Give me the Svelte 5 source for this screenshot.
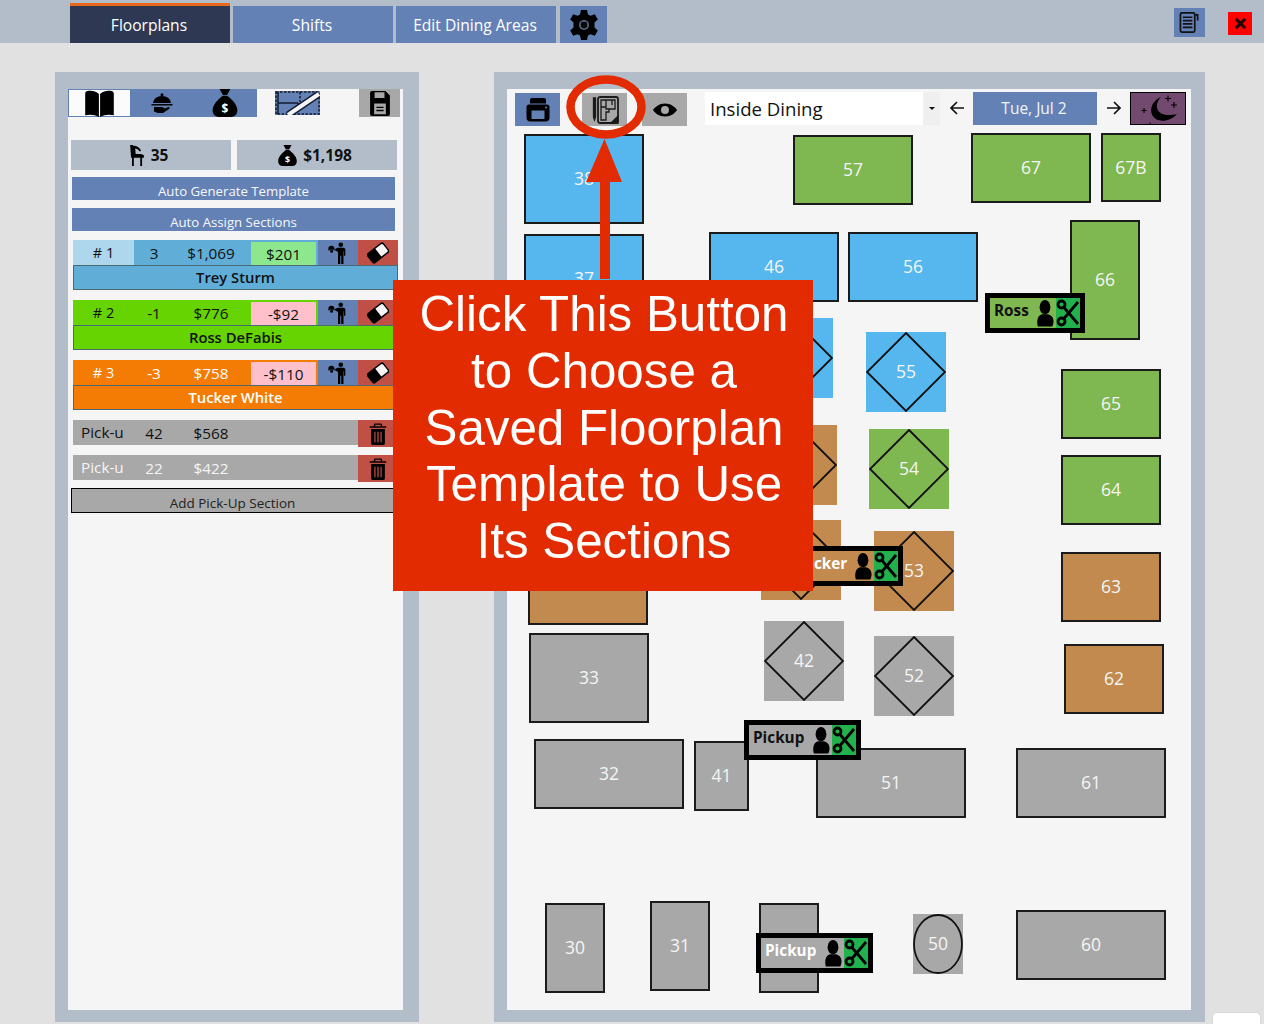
<script>
  const tabs = [
    { label: 'Shifts' },
    { label: 'Edit Dining Areas' }
  ];
  const sections = [
    { num: '# 1', count: '3', sales: '$1,069', diff: '$201', name: 'Trey Sturm', cls: 'blue', good: true },
    { num: '# 2', count: '-1', sales: '$776', diff: '-$92', name: 'Ross DeFabis', cls: 'lime', good: false },
    { num: '# 3', count: '-3', sales: '$758', diff: '-$110', name: 'Tucker White', cls: 'orange', good: false }
  ];
  const pickups = [
    { count: '42', sales: '$568', light: false },
    { count: '22', sales: '$422', light: true }
  ];
  const tan = '#c28a4e', sky = '#55b7ee', grn = '#7fb751', gry = '#a8a8a8';
  const tables = [
    ['38', 524, 134, 120, 90, sky], ['37', 524, 234, 120, 90, sky], ['57', 793, 135, 120, 70, grn],
    ['67', 971, 133, 120, 70, grn], ['67B', 1101, 133, 60, 69, grn], ['46', 709, 232, 130, 70, sky],
    ['56', 848, 232, 130, 70, sky], ['66', 1070, 220, 70, 120, grn], ['65', 1061, 369, 100, 70, grn],
    ['64', 1061, 455, 100, 70, grn], ['63', 1061, 552, 100, 70, tan], ['62', 1064, 644, 100, 70, tan],
    ['34', 528, 535, 120, 90, tan], ['33', 529, 633, 120, 90, gry], ['32', 534, 739, 150, 70, gry],
    ['41', 694, 741, 55, 70, gry], ['51', 816, 748, 150, 70, gry], ['61', 1016, 748, 150, 70, gry],
    ['30', 545, 903, 60, 90, gry], ['31', 650, 901, 60, 90, gry], ['40', 759, 903, 60, 90, gry],
    ['60', 1016, 910, 150, 70, gry]
  ];
  const diamonds = [
    ['45', 753, 318, sky], ['55', 866, 332, sky], ['44', 757, 425, tan], ['54', 869, 429, grn],
    ['43', 761, 520, tan], ['53', 874, 531, tan], ['42', 764, 621, gry], ['52', 874, 636, gry]
  ];
  const tags = [
    ['Ross', 985, 293, 100, grn, false],
    ['Tucker', 786, 546, 117, tan, true],
    ['Pickup', 744, 720, 117, gry, false],
    ['Pickup', 756, 933, 117, gry, true]
  ];
</script>

{#snippet waiter()}
  <svg viewBox="0 0 24 24" class="ic"><circle cx="15" cy="3" r="2.500"/><path d="M11.500 6.200h7l1.500 1.300V15h-1.500v-5l-.5 0V24h-2.500v-9h-1v9H12V11L8.500 8.800l.7-1.500z"/><path d="M1.500 7.500a3.300 3.300 0 0 1 6.600 0zM1 8h7.600v1.100H1z"/><path d="M3.500 9h3v2.500h-3z"/></svg>
{/snippet}
{#snippet eraser()}
  <svg viewBox="0 0 26 24" class="ic er"><g transform="rotate(-38 13 12)"><rect x="0.500" y="4.500" width="25" height="15" rx="3"/><path d="M13.500 6.200h8.800a1.600 1.600 0 0 1 1.600 1.600v8.400a1.600 1.600 0 0 1-1.600 1.600h-8.800z" fill="#f5f5f5"/></g></svg>
{/snippet}
{#snippet trash()}
  <svg viewBox="0 0 20 24" class="ic"><path d="M7 .5h6a1.500 1.500 0 0 1 1.500 1.500v1.500H19v1.800H1V3.500h4.500V2A1.500 1.500 0 0 1 7 .5zM7 3.500h6V2H7z"/><path fill-rule="evenodd" d="M2.500 6.500h15V22a2 2 0 0 1-2 2h-11a2 2 0 0 1-2-2zM6 9.500V21h1.300V9.500zm3.300 0V21h1.400V9.500zm3.400 0V21H14V9.500z"/></svg>
{/snippet}
{#snippet bag(size)}
  <svg viewBox="0 0 24 26" width={size} height={size} class="bag"><path d="M7 0h10l-3 5.500h-4zM10 6.300h4C19 10 23.500 15 23.500 20c0 4-3 6-6 6h-11c-3 0-6-2-6-6C.5 15 5 10 10 6.300z"/><text x="12" y="22" text-anchor="middle" class="dollar">$</text></svg>
{/snippet}
{#snippet tag(t)}
  <div class="tag" style="left:{t[1]}px;top:{t[2]}px;width:{t[3]}px;background:{t[4]}">
    <span class="tagname" class:white={t[5]}>{t[0]}</span>
    <svg viewBox="0 0 20 30" class="person"><ellipse cx="10" cy="8.500" rx="6" ry="8"/><path d="M2 30c-2-8 1-13 5-13.500h6C17 17 22 22 18 30z"/></svg>
    <span class="cut"><svg viewBox="0 0 24 30" class="scissors"><circle cx="5.500" cy="6.500" r="3.500" /><circle cx="5.500" cy="23.500" r="3.500"/><path d="M8 9.500 22 26M8 20.500 22 4"/></svg></span>
  </div>
{/snippet}

<div class="app">
  <header class="top">
    <div class="tab active">Floorplans</div>
    {#each tabs as t}<div class="tab">{t.label}</div>{/each}
    <div class="gear">
      <svg viewBox="0 0 28 30" width="28" height="30"><path d="M11 0h6l1 4.500 2.500 1.300 4.300-1.500 3 5.200L24.500 12.500v5l3.300 3-3 5.200-4.300-1.500L18 25.500 17 30h-6l-1-4.500-2.500-1.300-4.300 1.500-3-5.200 3.300-3v-5L.2 9.500l3-5.200 4.300 1.500L10 4.500z"/><circle cx="14" cy="15" r="5" fill="#5c6d8c" /><circle cx="14" cy="15" r="3.400" fill="#0a0a0a"/></svg>
    </div>
    <div class="spring"></div>
    <div class="notes">
      <svg viewBox="0 0 22 24" width="21" height="23" fill="none" stroke="#111" stroke-width="1.800"><rect x="1.500" y="2" width="15" height="20" rx="1.500"/><path d="M4 6.500h10M4 10h10M4 13.500h10M4 17h10"/><path d="M17 4h2.500v6" /></svg>
    </div>
    <div class="close"><svg viewBox="0 0 14 14" width="13" height="13"><path d="M2 2l10 10M12 2 2 12" stroke="#200" stroke-width="3.200"/></svg></div>
  </header>

  <main class="stage">
    <section class="panel left">
      <div class="sheet sidebar">
        <div class="modes">
          <div class="mode book">
            <svg viewBox="0 0 26 24" width="31" height="27" preserveAspectRatio="none"><path d="M12.500 3.500V24C9 22 5 21.500 1 22.500V3C1 1.500 2 1 3 .8 6.500 .2 10 1 12.500 3.500zM13.500 3.500C16 1 19.500 .2 23 .8 24 1 25 1.500 25 3v19.500C21 21.500 17 22 13.500 24z"/></svg>
          </div>
          <div class="mode tray">
            <svg viewBox="0 0 24 24" width="24" height="24"><circle cx="12" cy="3.800" r="1.500"/><path d="M3 12a9 7 0 0 1 18 0zM1.500 13h21v1.500h-21z"/><path d="M4 16h7c2 0 3 .8 3.500 1.500l4-1.500c1.500 0 1.500 1.500.5 2l-6 4H8l-4-1.500z"/></svg>
          </div>
          <div class="mode money">{@render bag(28)}</div>
          <div class="plan-tool">
            <svg viewBox="0 0 45 24" width="45" height="24"><rect width="45" height="24" fill="#6381b5"/><path d="M1 1h43v22H1zM25 1v10" fill="none" stroke="#141d30" stroke-width="1.500" stroke-dasharray="2.500 1.500"/><path d="M3 1v22M3 12h20" stroke="#141d30" stroke-width="1.500"/><path d="M23 12v4" stroke="#141d30" stroke-width="1.500"/><path d="M13 24 44 3" stroke="#141d30" stroke-width="7" fill="none"/><path d="M13 24 44 3" stroke="#f5f5f5" stroke-width="4" fill="none"/></svg>
          </div>
          <div class="save">
            <svg viewBox="0 0 24 30" width="22" height="27"><path fill-rule="evenodd" d="M3 1h15l5 5v21a2 2 0 0 1-2 2H3a2 2 0 0 1-2-2V3a2 2 0 0 1 2-2zM6 2.500V9h11V2.500zM5.500 15v12h13V15z"/><path d="M8 18.500h8v1.500H8zM8 22h8v1.500H8z"/></svg>
          </div>
        </div>

        <div class="stats">
          <div class="stat">
            <svg viewBox="0 0 18 24" width="17" height="22"><path d="M1 1h3v1c3-.5 7 1 9 5.500l-2 .5C10 6 8 5 6.500 5L7 11h3c2.500 0 5 .5 6 1.500V15h-2v9h-2v-9H5v9H3v-9H2z"/></svg>
            <b>35</b>
          </div>
          <div class="stat">{@render bag(21)}<b>$1,198</b></div>
        </div>

        <button class="wide">Auto Generate Template</button>
        <button class="wide second">Auto Assign Sections</button>

        {#each sections as s}
          <div class="sect {s.cls}">
            <div class="cells">
              <span class="num">{s.num}</span>
              <span>{s.count}</span>
              <span class="sales">{s.sales}</span>
              <span class="diff" class:good={s.good}>{s.diff}</span>
              <span class="act waiter">{@render waiter()}</span>
              <span class="act erase">{@render eraser()}</span>
            </div>
            <div class="who">{s.name}</div>
          </div>
        {/each}

        {#each pickups as p}
          <div class="pick" class:light={p.light}>
            <span class="pname">Pick-u</span>
            <span>{p.count}</span>
            <span class="sales">{p.sales}</span>
            <span></span>
            <span class="act erase">{@render trash()}</span>
          </div>
        {/each}

        <button class="add">Add Pick-Up Section</button>
      </div>
    </section>

    <section class="panel right">
      <div class="sheet floor">
        <div class="toolbar">
          <div class="tbtn b">
            <svg viewBox="0 0 24 24" width="24" height="25"><path d="M6 .5h12a2 2 0 0 1 2 2V6H4V2.500a2 2 0 0 1 2-2z"/><path fill-rule="evenodd" d="M3 7h18a2.500 2.500 0 0 1 2.500 2.500V20a4 4 0 0 1-4 4h-15a4 4 0 0 1-4-4V9.500A2.500 2.500 0 0 1 3 7zM5.500 13v8.500h13V13zM20 9a1 1 0 1 0 0 2 1 1 0 0 0 0-2z"/></svg>
          </div>
          <div class="tbtn g plan">
            <svg viewBox="0 0 30 30" width="30" height="30" fill="none" stroke="#1a1a1a" stroke-width="1.300"><path d="M3.500 3v19l1 3 1-3V3z" fill="#1a1a1a"/><rect x="8" y="2" width="20" height="26" rx="2" stroke-width="1.800"/><path d="M11 5h14v9h-6v3h-3v8h-5zM16 5v9h3M11 12h5M22 5v5"/><path d="M21 28l7-7v7z" fill="#1a1a1a"/></svg>
          </div>
          <div class="tbtn g eye">
            <svg viewBox="0 0 24 14" width="24" height="14"><path fill-rule="evenodd" d="M12 .5C18 .5 22 4 24 7c-2 3-6 6.500-12 6.500S2 10 0 7C2 4 6 .5 12 .5zM12 3a4 4 0 1 0 0 8 4 4 0 0 0 0-8z"/></svg>
          </div>
          <div class="picker"><span class="pick-label">Inside Dining</span><span class="drop"><i></i></span></div>
          <svg class="arrow" viewBox="0 0 16 16" width="16" height="16" fill="none" stroke="#111" stroke-width="1.700"><path d="M15 8H2M8 2 2 8l6 6"/></svg>
          <div class="date">Tue, Jul 2</div>
          <svg class="arrow" viewBox="0 0 16 16" width="16" height="16" fill="none" stroke="#111" stroke-width="1.700"><path d="M1 8h13M8 2l6 6-6 6"/></svg>
          <div class="moon">
            <svg viewBox="0 0 54 31" width="54" height="31"><path d="M30 4C22 12 25 26 46 21 41 27 33 29 27 27 17 23 18 9 30 4z"/><path d="M37 2.500v6M34 5.500h6M43 9v6M40 12h6M13 15v5M10.500 17.500h5M19 29.500v1.500" stroke="#000" stroke-width="1.100"/></svg>
          </div>
        </div>
      </div>

      <div class="map">
        {#each tables as t}
          <div class="tbl" style="left:{t[1]}px;top:{t[2]}px;width:{t[3]}px;height:{t[4]}px;background:{t[5]}">{t[0]}</div>
        {/each}
        {#each diamonds as d}
          <div class="dia" style="left:{d[1]}px;top:{d[2]}px;background:{d[3]}">
            <svg viewBox="0 0 80 80" width="80" height="80"><path d="M40 1 79 40 40 79 1 40z" fill="none" stroke="#111" stroke-width="1.800"/></svg>
            <span>{d[0]}</span>
          </div>
        {/each}
        <div class="dia oval" style="left:913px;top:914px;background:{gry}">
          <svg viewBox="0 0 50 60" width="50" height="60"><ellipse cx="25" cy="30" rx="24" ry="29" fill="none" stroke="#111" stroke-width="1.800"/></svg>
          <span>50</span>
        </div>
        {#each tags as t}{@render tag(t)}{/each}
      </div>
    </section>
  </main>

  <div class="callout">Click This Button<br>to Choose a<br>Saved Floorplan<br>Template to Use<br>Its Sections</div>
  <svg class="pointer" viewBox="0 0 100 220" width="100" height="220">
    <ellipse cx="52" cy="34" rx="35.500" ry="27.500" fill="none" stroke="#e22b00" stroke-width="8.500"/>
    <path d="M50.500 66 68 109H56V206H46V109H32z" fill="#e22b00"/>
  </svg>
  <div class="corner"></div>
</div>

<style>
  :global(body) { margin: 0; background: #e1e1e1; }
  .app { position: relative; width: 1264px; height: 1024px; overflow: hidden; background: #e1e1e1; font-family: "Open Sans", "Noto Sans", sans-serif; color: #111; }

  .top { height: 43px; background: #b2bdc9; display: flex; align-items: flex-end; padding-left: 70px; box-sizing: border-box; }
  .tab { width: 160px; height: 37px; margin-right: 3px; padding-right: 2px; box-sizing: border-box; background: #6381b5; color: #fff; font-size: 15.600px; display: flex; align-items: center; justify-content: center; }
  .tab.active { height: 40px; background: #2f3852; border-top: 3px solid #e8681c; }
  .gear { width: 47px; height: 37px; margin-left: 1px; background: #6381b5; display: flex; align-items: center; justify-content: center; }
  .spring { flex: 1; }
  .notes { width: 31px; height: 29px; margin-bottom: 6px; background: #6381b5; display: flex; align-items: center; justify-content: center; }
  .close { width: 24px; height: 23px; margin: 0 12px 8px 23px; background: #f00; display: flex; align-items: center; justify-content: center; }

  .stage { display: flex; padding: 29px 0 0 55px; gap: 75px; align-items: flex-start; }
  .panel { background: #b2bdc9; box-sizing: border-box; height: 950px; }
  .left { width: 364px; padding: 17px 16px 12px 13px; }
  .right { width: 711px; padding: 17px 14px 12px 13px; }
  .sheet { background: #f5f5f5; height: 100%; box-sizing: border-box; }

  .modes { display: flex; height: 28px; }
  .mode { display: flex; align-items: center; justify-content: center; background: #6381b5; }
  .mode.book { width: 62px; background: #fbfbfb; border: 1px solid #6381b5; border-right: 0; box-sizing: border-box; height: 28px; }
  .mode.tray { width: 63px; }
  .mode.money { width: 64px; }
  .plan-tool { margin: 2px 0 0 18px; height: 24px; width: 45px; line-height: 0; }
  .save { margin-left: 39px; width: 41px; height: 28px; background: #a8a8a8; display: flex; align-items: center; justify-content: center; }

  .stats { display: flex; gap: 6px; margin: 23px 0 7px 3px; }
  .stat { width: 160px; height: 30px; padding-right: 5px; box-sizing: border-box; background: #b2bdc9; display: flex; align-items: center; justify-content: center; gap: 5px; font-size: 15.500px; }
  .stat b { font-weight: 700; }
  .bag { display: block; }
  .dollar { fill: #fff; font-size: 11px; font-weight: 700; font-family: "Open Sans", sans-serif; }

  .wide { display: block; width: 323px; height: 23px; margin: 0 0 8px 4px; padding: 4px 0 0; border: 0; background: #6381b5; color: #f6f8fb; font: 400 13.200px/20px "Open Sans", sans-serif; overflow: hidden; }
  .wide.second { margin-bottom: 9px; }

  .sect { width: 325px; margin: 0 0 10px 5px; }
  .cells { display: grid; grid-template-columns: 61px 40px 77px 67px 40px 40px; height: 25px; font-size: 15.300px; align-items: center; text-align: center; }
  .cells > span { line-height: 27px; height: 25px; }
  .cells .num { line-height: 25px; font-size: 14.500px; }
  .sales { padding-right: 3px; }
  .cells .diff { margin: 2px 2px 0 0; background: #ffc0cb; color: #111; height: 23px; line-height: 25px; }
  .cells .diff.good { background: #8de88d; }
  .act { display: flex; align-items: center; justify-content: center; }
  .waiter { background: #6381b5; }
  .erase { background: #c05046; }
  .ic { width: 22px; height: 22px; fill: #000; display: block; }
  .who { height: 25px; box-sizing: border-box; border: 1px solid #4a6a72; line-height: 23px; text-align: center; font-size: 14.800px; font-weight: 600; color: #111; }
  .blue .cells, .blue .who { background: #60aed8; }
  .blue .num { background: #aed6ec; }
  .lime .cells, .lime .who { background: #66d400; }
  .orange .cells, .orange .who { background: #f57c04; color: #fff; }
  .orange .diff { color: #111; }
  .pick { display: grid; grid-template-columns: 61px 40px 77px 107px 40px; width: 325px; height: 25px; margin: 0 0 10px 5px; background: #a8a8a8; font-size: 15.300px; line-height: 27px; text-align: center; }
  .pick .pname { text-align: left; padding-left: 8px; line-height: 25px; }
  .pick.light { color: #f5f5f5; }
  .add { display: block; width: 323px; height: 25px; margin: -2px 0 0 3px; padding: 4px 0 0; box-sizing: border-box; border: 1px solid #000; background: #a8a8a8; color: #222; font: 13.500px/20px "Open Sans", sans-serif; overflow: hidden; }

  .toolbar { position: relative; display: flex; align-items: flex-start; height: 37px; padding: 3px 0 0 8px; box-sizing: border-box; }
  .tbtn { width: 45px; height: 33px; margin-top: 1px; display: flex; align-items: center; justify-content: center; }
  .tbtn.b { background: #6381b5; margin-right: 22px; }
  .tbtn.g { background: #a8a8a8; }
  .tbtn.plan { margin-right: 15px; }
  .tbtn.eye { margin-right: 18px; }
  .picker { width: 235px; height: 33px; background: #fff; display: flex; align-items: center; font-size: 18.600px; justify-content: space-between; }
  .pick-label { padding-left: 5px; }
  .drop { width: 17px; height: 33px; background: #efefef; display: flex; align-items: center; justify-content: center; }
  .drop i { border: 3px solid transparent; border-top: 3px solid #111; border-bottom: 0; }
  .arrow { margin: 8px 8px 0 9px; }
  .date { width: 124px; height: 33px; padding-right: 2px; box-sizing: border-box; background: #6381b5; color: #f2f5fa; font-size: 15.500px; line-height: 33px; text-align: center; }
  .moon { width: 56px; height: 33px; box-sizing: border-box; border: 1px solid #000; background: #724a70; display: flex; align-items: center; justify-content: center; }

  .map { position: absolute; inset: 0; pointer-events: none; }
  .tbl { position: absolute; box-sizing: border-box; border: 2px solid #1b1b1b; padding-bottom: 2px; display: flex; align-items: center; justify-content: center; color: #f5f5f5; font-size: 17.500px; }
  .dia { position: absolute; width: 80px; height: 80px; padding-bottom: 2px; box-sizing: border-box; display: flex; align-items: center; justify-content: center; color: #f5f5f5; font-size: 17.500px; }
  .dia svg { position: absolute; inset: 0; }
  .dia span { position: relative; }
  .dia.oval { width: 50px; height: 60px; }
  .tag { position: absolute; height: 40px; box-sizing: border-box; border: 5px solid #000; display: flex; align-items: center; padding-left: 4px; }
  .tagname { flex: 1; font-size: 15.300px; font-weight: 700; color: #111; margin-top: -7px; }
  .tagname.white { color: #fff; }
  .person { width: 18px; height: 30px; fill: #000; margin-right: 2px; }
  .cut { width: 24px; height: 30px; background: #22b14c; display: flex; }
  .scissors { width: 24px; height: 30px; fill: none; stroke: #000; stroke-width: 2.800; }
  .callout { position: absolute; left: 393px; top: 280px; width: 420px; height: 311px; box-sizing: border-box; padding: 6px 0 0 2px; background: #e22b00; color: #fff; font: 49.300px/56.750px "Liberation Sans", Arial, sans-serif; text-align: center; }
  .pointer { position: absolute; left: 554px; top: 73px; }
  .corner { position: absolute; left: 1212px; top: 1012px; width: 47px; height: 30px; background: #fff; border: 1px solid #d8d8d8; border-radius: 5px; }
</style>
